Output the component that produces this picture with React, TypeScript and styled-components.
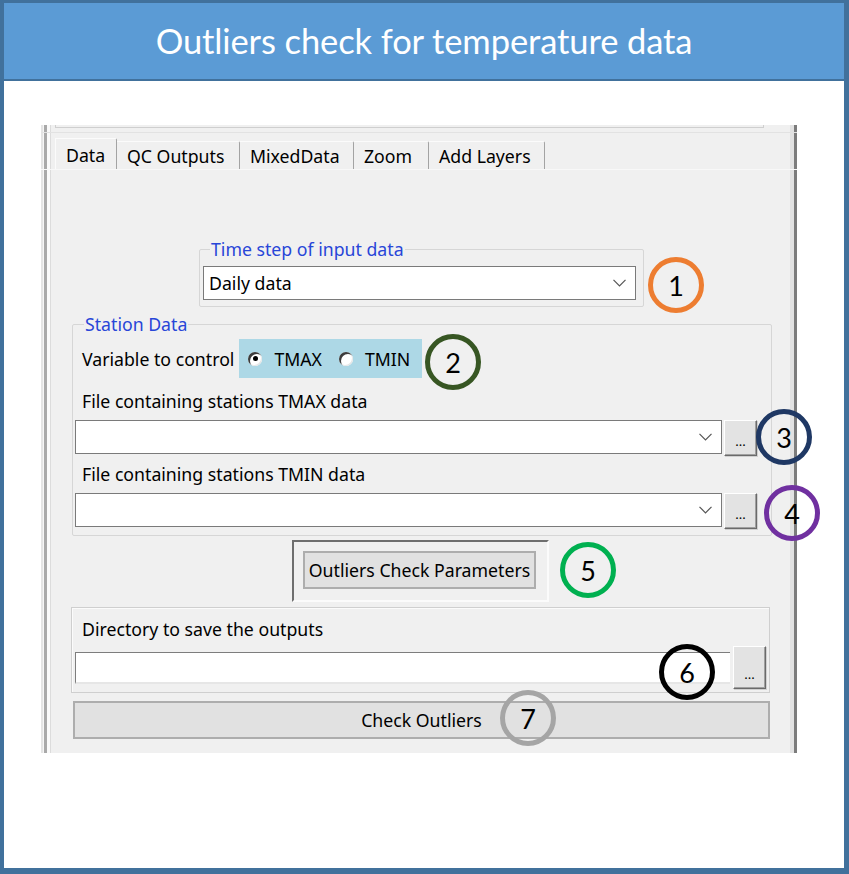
import React from "react";
import styled, { createGlobalStyle } from "styled-components";

const GlobalStyle = createGlobalStyle`
  html, body { margin: 0; padding: 0; background: #ffffff; }
  body { font-family: "Noto Sans", "Open Sans", sans-serif; }
  * { box-sizing: border-box; }
`;

const Frame = styled.div`
  position: relative;
  width: 849px;
  height: 874px;
  border-style: solid;
  border-color: #41719c;
  border-width: 3px 5px 6px 4px;
  background: #ffffff;
  display: flex;
  flex-direction: column;
`;

const Header = styled.header`
  height: 78px;
  flex: none;
  background: #5b9bd5;
  border-bottom: 2px solid #41719c;
  display: flex;
  align-items: center;
  justify-content: center;
  color: #ffffff;
  font-family: Lato, "Noto Sans", sans-serif;
  font-size: 34.5px;
  letter-spacing: -0.1px;
  padding-bottom: 1px;
`;

const Canvas = styled.main`
  padding: 44px 0 0 37px;
`;

const Panel = styled.section`
  width: 756px;
  height: 628px;
  background: #f0f0f0;
  display: flex;
  flex-direction: column;
  box-shadow: inset 2px 0 0 #e4e4e4, inset 3px 0 0 #f6f6f6, inset 6px 0 0 #a9a9a9,
    inset 9px 0 0 #fafafa, inset 10px 0 0 #dcdcdc, inset -3px 0 0 #7c7c7c,
    inset -7px 0 0 #e2e2e2;
  font-size: 17.7px;
  color: #000;
`;

const Stub = styled.div`
  height: 7px;
  flex: none;
  padding: 0 33px 0 14px;
`;

const StubFrame = styled.div`
  height: 3px;
  border: 1px solid #cfcfcf;
  border-top: none;
`;

const TabStrip = styled.nav`
  height: 37px;
  flex: none;
  display: flex;
  align-items: flex-end;
  padding-left: 14px;
  border-top: 1px solid #e2e2e2;
`;

const Tab = styled.div<{ $active?: boolean; $w: number }>`
  width: ${(p) => p.$w}px;
  height: ${(p) => (p.$active ? 31 : 28)}px;
  padding: 0 0 ${(p) => (p.$active ? 4 : 3)}px 10px;
  display: flex;
  align-items: flex-end;
  white-space: nowrap;
  border-top: 1px solid #fbfbfb;
  border-left: ${(p) => (p.$active ? "1px solid #fbfbfb" : "none")};
  border-right: 1px solid #a3a3a3;
  border-top-right-radius: 2px;
  background: #f0f0f0;
  line-height: 20px;
`;

const Page = styled.div`
  flex: 1;
  display: flex;
  flex-direction: column;
  align-items: flex-start;
  border-top: 1px solid #f8f8f8;
`;

const Group = styled.fieldset<{ $left: number; $top: number; $w: number }>`
  margin: ${(p) => p.$top}px 0 0 ${(p) => p.$left}px;
  width: ${(p) => p.$w}px;
  min-width: 0;
  border: 1px solid #d6d6d6;
  border-radius: 2px;
  padding: 0 14px 6px 2px;
  display: flex;
  flex-direction: column;
`;

const Legend = styled.legend<{ $indent: number }>`
  color: #2846d8;
  padding: 0 1px;
  margin-left: ${(p) => p.$indent}px;
  line-height: 20px;
`;

const Combo = styled.div`
  flex: 1;
  height: 34px;
  background: #ffffff;
  border: 1px solid #7a7a7a;
  display: flex;
  align-items: center;
  justify-content: space-between;
  padding: 0 9px 0 5px;
  white-space: nowrap;
`;

const TimeCombo = styled(Combo)`
  margin: 7px 0 0 1px;
  flex: none;
  width: 433px;
`;

const VarRow = styled.div`
  height: 39px;
  margin-top: 5px;
  display: flex;
  align-items: center;
  padding-left: 7px;
  gap: 5px;
`;

const RadioPanel = styled.div`
  height: 39px;
  width: 183px;
  background: #add8e6;
  display: flex;
  align-items: center;
  padding-left: 9px;
  gap: 17px;
`;

const RadioItem = styled.label`
  display: flex;
  align-items: center;
  gap: 12px;
`;

const RadioDot = styled.span<{ $on?: boolean }>`
  width: 14px;
  height: 14px;
  border-radius: 50%;
  background: #ffffff;
  box-shadow: inset 2px 2px 0 #3c3c3c, inset -1px -1px 0 #e6e6e6;
  display: flex;
  align-items: center;
  justify-content: center;
  &::after {
    content: "";
    width: 5px;
    height: 5px;
    border-radius: 50%;
    background: ${(p) => (p.$on ? "#000" : "transparent")};
  }
`;

const FieldLabel = styled.div<{ $top: number }>`
  margin-top: ${(p) => p.$top}px;
  padding-left: 7px;
  line-height: 20px;
  white-space: nowrap;
`;

const ComboRow = styled.div`
  margin-top: 9px;
  display: flex;
  align-items: flex-start;
  gap: 2px;
`;

const Browse = styled.button<{ $h: number }>`
  width: 33px;
  height: ${(p) => p.$h}px;
  flex: none;
  padding: 0 0 7px;
  background: #e3e3e3;
  border: 1px solid;
  border-color: #ffffff #6a6a6a #6a6a6a #ffffff;
  box-shadow: inset -1px -1px 0 #a0a0a0, 1px 1px 0 #d0d0d0;
  font-family: inherit;
  font-size: 13px;
  color: #000;
  display: flex;
  align-items: flex-end;
  justify-content: center;
  line-height: 1;
`;

const ParamFrame = styled.div`
  margin: 4px 0 0 251px;
  width: 257px;
  height: 62px;
  border: 2px solid;
  border-color: #6e6e6e #fbfbfb #fbfbfb #6e6e6e;
  padding: 9px 0 0 9px;
`;

const PushButton = styled.button<{ $w: number }>`
  width: ${(p) => p.$w}px;
  height: 38px;
  background: #e1e1e1;
  border: 2px solid #adadad;
  font-family: inherit;
  font-size: 17.7px;
  color: #000;
  padding: 0;
  display: flex;
  align-items: center;
  justify-content: center;
  white-space: nowrap;
`;

const CheckButton = styled(PushButton)`
  margin: 8px 0 0 32px;
`;

const DirBox = styled.div`
  margin: 5px 0 0 30px;
  width: 699px;
  height: 86px;
  border: 1px solid #cfcfcf;
  box-shadow: inset 1px 1px 0 #fbfbfb;
  padding: 11px 3px 3px 3px;
  display: flex;
  flex-direction: column;
`;

const DirRow = styled.div`
  margin-top: 7px;
  display: flex;
  align-items: center;
  gap: 3px;
`;

const DirInput = styled.div`
  width: 655px;
  height: 32px;
  background: #ffffff;
  border-top: 1px solid #7d7d7d;
  border-left: 1px solid #7d7d7d;
  border-bottom: 2px solid #e6e6e6;
`;

const Marker = styled.div<{ $c: string; $x: number; $y: number }>`
  position: absolute;
  left: ${(p) => p.$x - 28 - 4}px;
  top: ${(p) => p.$y - 28 - 3}px;
  width: 56px;
  height: 56px;
  border-radius: 50%;
  border: 5px solid ${(p) => p.$c};
  background: transparent;
  display: flex;
  align-items: center;
  justify-content: center;
  font-family: Lato, "Noto Sans", sans-serif;
  font-size: 27px;
  color: #000;
  line-height: 1;
  padding-top: 1px;
`;

const Chevron = () => (
  <svg width="13" height="8" viewBox="0 0 13 8">
    <polyline points="0.5,0.8 6.5,6.8 12.5,0.8" fill="none" stroke="#555" strokeWidth="1.2" />
  </svg>
);

const tabs: [string, number][] = [
  ["Data", 62],
  ["QC Outputs", 123],
  ["MixedData", 114],
  ["Zoom", 75],
  ["Add Layers", 116],
];

const markers: [string, string, number, number][] = [
  ["1", "#ed7d31", 676, 285],
  ["2", "#375623", 453, 362],
  ["3", "#1f3864", 784, 437],
  ["4", "#7030a0", 792, 513],
  ["5", "#00b050", 588, 570],
  ["6", "#000000", 687, 672],
  ["7", "#a5a5a5", 528, 718],
];

export default function App() {
  return (
    <>
      <GlobalStyle />
      <Frame>
        <Header>Outliers check for temperature data</Header>
        <Canvas>
          <Panel>
            <Stub>
              <StubFrame />
            </Stub>
            <TabStrip>
              {tabs.map(([t, w], i) => (
                <Tab key={t} $w={w} $active={i === 0}>
                  {t}
                </Tab>
              ))}
            </TabStrip>
            <Page>
              <Group $left={158} $top={69} $w={445}>
                <Legend $indent={8}>Time step of input data</Legend>
                <TimeCombo>
                  <span>Daily data</span>
                  <Chevron />
                </TimeCombo>
              </Group>

              <Group $left={31} $top={7} $w={700}>
                <Legend $indent={9}>Station Data</Legend>
                <VarRow>
                  <span>Variable to control</span>
                  <RadioPanel>
                    <RadioItem>
                      <RadioDot $on />
                      TMAX
                    </RadioItem>
                    <RadioItem>
                      <RadioDot />
                      TMIN
                    </RadioItem>
                  </RadioPanel>
                </VarRow>
                <FieldLabel $top={13}>File containing stations TMAX data</FieldLabel>
                <ComboRow>
                  <Combo>
                    <span />
                    <Chevron />
                  </Combo>
                  <Browse $h={36}>...</Browse>
                </ComboRow>
                <FieldLabel $top={8}>File containing stations TMIN data</FieldLabel>
                <ComboRow>
                  <Combo>
                    <span />
                    <Chevron />
                  </Combo>
                  <Browse $h={36}>...</Browse>
                </ComboRow>
              </Group>

              <ParamFrame>
                <PushButton $w={233}>Outliers Check Parameters</PushButton>
              </ParamFrame>

              <DirBox>
                <FieldLabel $top={0}>Directory to save the outputs</FieldLabel>
                <DirRow>
                  <DirInput />
                  <Browse $h={43}>...</Browse>
                </DirRow>
              </DirBox>

              <CheckButton $w={697}>Check Outliers</CheckButton>
            </Page>
          </Panel>
        </Canvas>
        {markers.map(([n, c, x, y]) => (
          <Marker key={n} $c={c} $x={x} $y={y}>
            {n}
          </Marker>
        ))}
      </Frame>
    </>
  );
}
